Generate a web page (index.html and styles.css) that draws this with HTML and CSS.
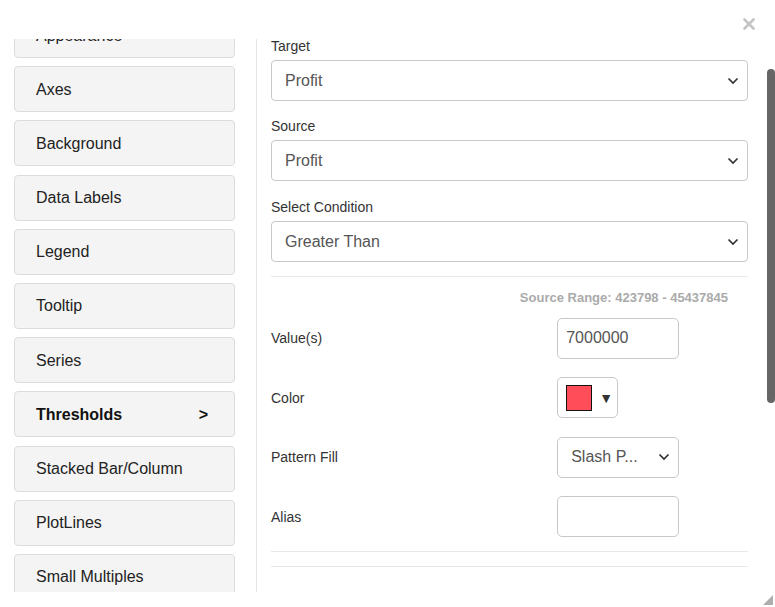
FILE: index.html
```html
<!DOCTYPE html>
<html>
<head>
<meta charset="utf-8">
<link rel="stylesheet" href="styles.css">
</head>
<body>
<div class="dialog">
  <div class="header">
    <svg class="close" width="12" height="12" viewBox="0 0 12 12"><path d="M1.5 1.5 L10.5 10.5 M10.5 1.5 L1.5 10.5" stroke="#c4c4c4" stroke-width="2.6" stroke-linecap="round"/></svg>
  </div>
  <div class="main">
    <div class="sidebar">
      <div class="menu">
        <div class="item">Appearance</div>
        <div class="item">Axes</div>
        <div class="item">Background</div>
        <div class="item">Data Labels</div>
        <div class="item">Legend</div>
        <div class="item">Tooltip</div>
        <div class="item">Series</div>
        <div class="item active"><span>Thresholds</span><span class="arrow">&gt;</span></div>
        <div class="item">Stacked Bar/Column</div>
        <div class="item">PlotLines</div>
        <div class="item">Small Multiples</div>
      </div>
    </div>
    <div class="pane">
      <div class="content">
        <div class="group">
          <div class="label">Target</div>
          <div class="select"><span>Profit</span><svg class="chev" width="12" height="8" viewBox="0 0 12 8"><path d="M1.5 1.5 L6 6 L10.5 1.5" fill="none" stroke="#333" stroke-width="1.7"/></svg></div>
        </div>
        <div class="group">
          <div class="label">Source</div>
          <div class="select"><span>Profit</span><svg class="chev" width="12" height="8" viewBox="0 0 12 8"><path d="M1.5 1.5 L6 6 L10.5 1.5" fill="none" stroke="#333" stroke-width="1.7"/></svg></div>
        </div>
        <div class="group last">
          <div class="label">Select Condition</div>
          <div class="select"><span>Greater Than</span><svg class="chev" width="12" height="8" viewBox="0 0 12 8"><path d="M1.5 1.5 L6 6 L10.5 1.5" fill="none" stroke="#333" stroke-width="1.7"/></svg></div>
        </div>
        <div class="rule first"></div>
        <div class="range">Source Range: 423798 - 45437845</div>
        <div class="rows">
          <div class="row">
            <div class="rlabel">Value(s)</div>
            <div class="ctrl"><div class="input">7000000</div></div>
          </div>
          <div class="row">
            <div class="rlabel">Color</div>
            <div class="ctrl"><div class="colorbtn"><span class="swatch"></span><span class="tri">&#9660;</span></div></div>
          </div>
          <div class="row">
            <div class="rlabel">Pattern Fill</div>
            <div class="ctrl"><div class="input sel"><span>Slash P...</span><svg class="chev" width="12" height="8" viewBox="0 0 12 8"><path d="M1.5 1.5 L6 6 L10.5 1.5" fill="none" stroke="#333" stroke-width="1.7"/></svg></div></div>
          </div>
          <div class="row">
            <div class="rlabel">Alias</div>
            <div class="ctrl"><div class="input"></div></div>
          </div>
        </div>
        <div class="rule second"></div>
        <div class="rule third"></div>
      </div>
      <div class="track"><div class="thumb"></div></div>
    </div>
  </div>
  <div class="footer">
    <svg class="grip" width="10" height="10" viewBox="0 0 10 10"><path d="M10 0 L10 10 L0 10 Z" fill="#9a9a9a"/></svg>
  </div>
</div>
</body>
</html>
```
FILE: styles.css
```css
* { box-sizing: border-box; }
html, body { margin: 0; padding: 0; background: #fff; }
body {
  font-family: "Liberation Sans", Arial, sans-serif;
  color: #333;
  width: 775px;
  height: 607px;
  overflow: hidden;
}
.dialog { display: flex; flex-direction: column; height: 607px; }
.header {
  height: 39px;
  display: flex;
  justify-content: flex-end;
  padding: 18px 20px 0 0;
}
.close { display: block; }
.main { display: flex; height: 553px; }
.sidebar {
  width: 257px;
  flex: none;
  padding: 0 21px 0 14px;
  overflow: hidden;
  border-right: 1px solid #e6e6e6;
}
.menu {
  display: flex;
  flex-direction: column;
  gap: 8.2px;
  margin-top: -27px;
}
.item {
  height: 46px;
  flex: none;
  background: #f4f4f4;
  border: 1px solid #dcdcdc;
  border-radius: 4px;
  padding: 1px 26px 0 21px;
  display: flex;
  align-items: center;
  justify-content: space-between;
  font-size: 16px;
  color: #222;
}
.item.active { font-weight: bold; color: #111; }
.arrow { font-weight: bold; }
.pane { display: flex; flex: 1; overflow: hidden; }
.content {
  width: 491px;
  flex: none;
  padding: 0 0 0 14px;
}
.group { margin-bottom: 17.5px; }
.group:first-child { margin-top: -1.5px; }
.group.last { margin-bottom: 0; }
.label {
  font-size: 14px;
  line-height: 17px;
  margin-bottom: 5px;
  color: #333;
}
.select {
  height: 41px;
  border: 1px solid #c8c8c8;
  border-radius: 4px;
  display: flex;
  align-items: center;
  justify-content: space-between;
  padding: 1px 8px 0 13px;
  font-size: 16px;
  color: #555;
}
.rule { height: 1px; background: #e8e8e8; }
.rule.first { margin-top: 14px; }
.range {
  margin-top: 13px;
  text-align: right;
  padding-right: 20px;
  font-size: 13px;
  line-height: 15px;
  font-weight: bold;
  color: #aaa;
}
.rows {
  margin-top: 13px;
  display: flex;
  flex-direction: column;
  gap: 18.5px;
}
.row { display: flex; align-items: center; height: 41px; }
.rlabel { width: 60%; font-size: 14px; color: #333; }
.ctrl { width: 40%; }
.input {
  width: 122px;
  height: 41px;
  border: 1px solid #c8c8c8;
  border-radius: 5px;
  padding: 0 8px;
  display: flex;
  align-items: center;
  font-size: 16px;
  color: #555;
}
.input.sel { justify-content: space-between; padding: 0 8px 0 13px; }
.colorbtn {
  width: 61px;
  height: 41px;
  border: 1px solid #c8c8c8;
  border-radius: 5px;
  display: flex;
  align-items: center;
  padding: 0 0 0 8px;
}
.swatch {
  width: 26px;
  height: 26px;
  background: #ff4d5a;
  border: 1px solid #111;
}
.tri { font-size: 14px; color: #333; margin-left: 7px; }
.rule.second { margin-top: 14px; }
.rule.third { margin-top: 14px; }
.track { width: 8px; margin-left: 19px; padding-top: 30px; }
.thumb {
  width: 8px;
  height: 334px;
  background: #666;
  border-radius: 4px;
}
.footer {
  flex: 1;
  display: flex;
  justify-content: flex-end;
  align-items: flex-start;
  padding: 3px 2px 0 0;
}
.grip { display: block; opacity: 0.8; }
```
